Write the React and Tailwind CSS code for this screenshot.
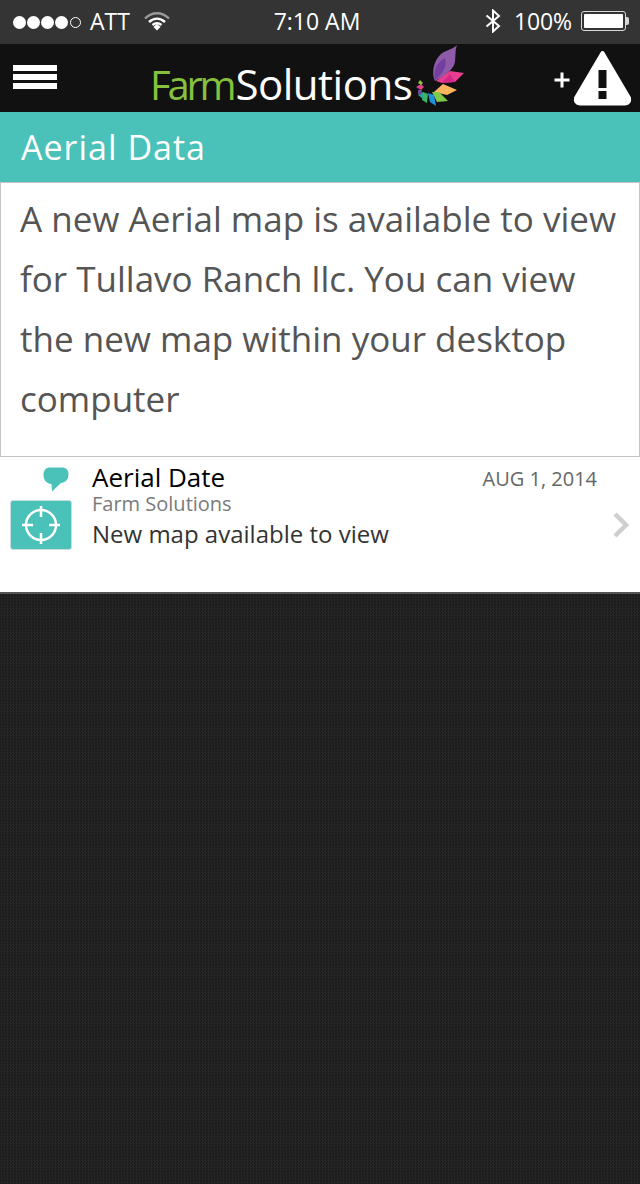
const font = "font-['Open_Sans',sans-serif]"

function StatusBar() {
  return (
    <div className="h-[44px] bg-[#343434] flex items-center justify-between pl-[13px] pr-[9px] text-[23px] text-white font-['Open_Sans',sans-serif]">
      <div className="flex items-center w-[200px] -mt-[2px]">
        <div className="flex items-center gap-[1px] mt-[2px]">
          <span className="w-[13px] h-[13px] rounded-full bg-white" />
          <span className="w-[13px] h-[13px] rounded-full bg-white" />
          <span className="w-[13px] h-[13px] rounded-full bg-white" />
          <span className="w-[13px] h-[13px] rounded-full bg-white" />
          <span className="w-[11px] h-[11px] ml-[1px] rounded-full border border-white" />
        </div>
        <span className="ml-[9px] leading-none">ATT</span>
        <svg className="ml-[14px]" width="26" height="20" viewBox="0 0 26 20">
          <path d="M1 7.500 C8 0.500 18 0.500 25 7.500" fill="none" stroke="#9a9a9a" strokeWidth="2.400" />
          <path d="M5 11 C10 6.500 16 6.500 21 11" fill="none" stroke="#fff" strokeWidth="2.400" />
          <path d="M8.500 14 C11.500 11.500 14.500 11.500 17.500 14" fill="none" stroke="#fff" strokeWidth="2.400" />
          <path d="M9.500 16 L13 12.800 L16.500 16 L13 19.500 Z" fill="#fff" />
        </svg>
      </div>
      <span className="leading-none -mt-[2px] -ml-[8px]">7:10 AM</span>
      <div className="flex items-center justify-end w-[200px] -mt-[2px] mr-[2px]">
        <svg width="16" height="24" viewBox="0 0 16 24">
          <path d="M1.500 6.500 L14 17 L8 22.500 V1.500 L14 7 L1.500 17.500" fill="none" stroke="#fff" strokeWidth="2" />
        </svg>
        <span className="ml-[13px] leading-none tracking-[-0.1px]">100%</span>
        <div className="ml-[9px] w-[45px] h-[20px] rounded-[3px] border border-[#d8d8d8] p-[2px]">
          <div className="w-full h-full bg-white rounded-[1px]" />
        </div>
        <span className="w-[3px] h-[8px] bg-[#d8d8d8] rounded-r-[2px]" />
      </div>
    </div>
  )
}

function LogoMark() {
  return (
    <svg width="50" height="62" viewBox="0 0 50 62">
      <path d="M42 0 C39 8 42 16 38 22 C33 29 26 33 20 36 C16 28 19 16 25 10 C30 5 37 5 42 0 Z" fill="#8f5aa8" />
      <path d="M20 35 C18 25 22 17 30 13 C33 20 27 30 20 35 Z" fill="#7440a0" />
      <path d="M21 36 L35 26 L49 28 L40 37 L27 38 Z" fill="#e83e8f" />
      <path d="M26 38 L35 29 L40 37 Z" fill="#d6278a" />
      <path d="M19 47 L28 39 L42 45 L32 50 Z" fill="#fbb45c" />
      <path d="M17 47 L24 47 L33 56 L22 57 Z" fill="#7ec84a" />
      <path d="M13 48 L19 50 L21 61 L15 57 Z" fill="#1c93df" />
      <path d="M8 47 L13 49 L12 58 L7 55 Z" fill="#3fb35f" />
      <path d="M3 50 L8 47 L8 54 Z" fill="#2aa59b" />
      <path d="M1 42 L6 39 L9 42 L6 45 Z" fill="#e0408c" />
      <path d="M3 38 L5 35 L8 38 L6 40 Z" fill="#8cc63f" />
      <path d="M3 45 L7 45 L6 50 L3 49 Z" fill="#6d4c9c" />
    </svg>
  )
}

function NavBar() {
  return (
    <div className="relative h-[68px] bg-[#111111] flex items-center justify-between pl-[13px] pr-[8px]">
      <div className="flex flex-col gap-[3px] mb-[3px]">
        <span className="block w-[44px] h-[6px] bg-white" />
        <span className="block w-[44px] h-[6px] bg-white" />
        <span className="block w-[44px] h-[6px] bg-white" />
      </div>
      <div className="absolute left-[150px] top-[1px] flex items-start">
        <span className="text-[42px] leading-[78px] h-[66px] font-['Open_Sans',sans-serif] whitespace-nowrap">
          <span className="text-[#86c13e] text-[40px] tracking-[-3.2px]">Farm</span>
          <span className="text-white tracking-[-0.5px] ml-[2px]">Solutions</span>
        </span>
        <div className="ml-[3px]"><LogoMark /></div>
      </div>
      <div className="flex items-center">
        <svg className="mt-[4px]" width="16" height="16" viewBox="0 0 16 16">
          <path d="M8 0.500 V15.500 M0.500 8 H15.500" stroke="#fff" strokeWidth="3" />
        </svg>
        <svg className="ml-[3px]" width="59" height="57" viewBox="0 0 59 57">
          <path d="M29.500 3 L56 48 Q57 53 52 53.500 H7 Q2 53 3 48 Z" fill="#fff" stroke="#fff" strokeWidth="4" strokeLinejoin="round" />
          <rect x="25.500" y="20" width="8" height="18" fill="#111" />
          <rect x="25.500" y="41" width="8" height="8" fill="#111" />
        </svg>
      </div>
    </div>
  )
}

function MessageRow() {
  return (
    <div className="h-[136px] bg-white flex border-b-2 border-[#555555]">
      <div className="w-[92px] shrink-0 flex flex-col pl-[10px] pt-[9px]">
        <svg className="ml-[33px]" width="26" height="25" viewBox="0 0 26 25">
          <path d="M7 0.500 H19 C23 0.500 25.500 3 25.500 7 C25.500 12 23 15.500 18 16 L9 24.500 L8.500 17 C3 16.500 0.500 12.500 0.500 8 C0.500 3 3 0.500 7 0.500 Z" fill="#4bc2b9" />
        </svg>
        <div className="mt-[8px] w-[62px] h-[50px] rounded-[3px] bg-[#4bc2b9] border border-[#c9dfdd] flex items-center justify-center">
          <svg width="38" height="38" viewBox="0 0 38 38">
            <circle cx="19" cy="19" r="15" fill="none" stroke="#fff" strokeWidth="2.500" />
            <path d="M19 0 V11 M19 27 V38 M0 19 H11 M27 19 H38" stroke="#fff" strokeWidth="2.500" />
          </svg>
        </div>
      </div>
      <div className="flex-1 min-w-0 font-['Open_Sans',sans-serif] pt-[4px]">
        <div className="flex items-start justify-between pr-[43px]">
          <span className="text-[26px] leading-[30px] text-black">Aerial Date</span>
          <span className="text-[20px] leading-[34px] h-[30px] text-[#666666]">AUG 1, 2014</span>
        </div>
        <div className="text-[20px] leading-[24px] text-[#7a7a7a]">Farm Solutions</div>
        <div className="flex items-start justify-between pr-[10px]">
          <span className="text-[24px] leading-[32px] mt-[2px] text-[#333333]">New map available to view</span>
          <svg className="-mt-[4px] mr-[1px]" width="17" height="26" viewBox="0 0 17 26">
            <path d="M3 2 L14 13 L3 24" fill="none" stroke="#cfcfcf" strokeWidth="4.500" />
          </svg>
        </div>
      </div>
    </div>
  )
}

export default function App() {
  return (
    <div className="w-[640px] h-[1184px] flex flex-col overflow-hidden bg-white">
      <StatusBar />
      <NavBar />
      <div className={`h-[70px] bg-[#4bc2b9] flex items-center pl-[21px] text-[34px] text-white tracking-[1px] ${font}`}>
        Aerial Data
      </div>
      <div className={`h-[275px] bg-white border border-[#c4c4c4] pl-[19px] pr-[10px] pt-[6px] text-[35px] leading-[60px] text-[#555555] ${font}`}>
        A new Aerial map is available to view for Tullavo Ranch llc. You can view the new map within your desktop computer
      </div>
      <div className="h-[1px] bg-white" />
      <MessageRow />
      <div className="flex-1 bg-[conic-gradient(#262626_25%,#1b1b1b_0_50%,#262626_0_75%,#1b1b1b_0)] bg-[length:3px_3px]" />
    </div>
  )
}
